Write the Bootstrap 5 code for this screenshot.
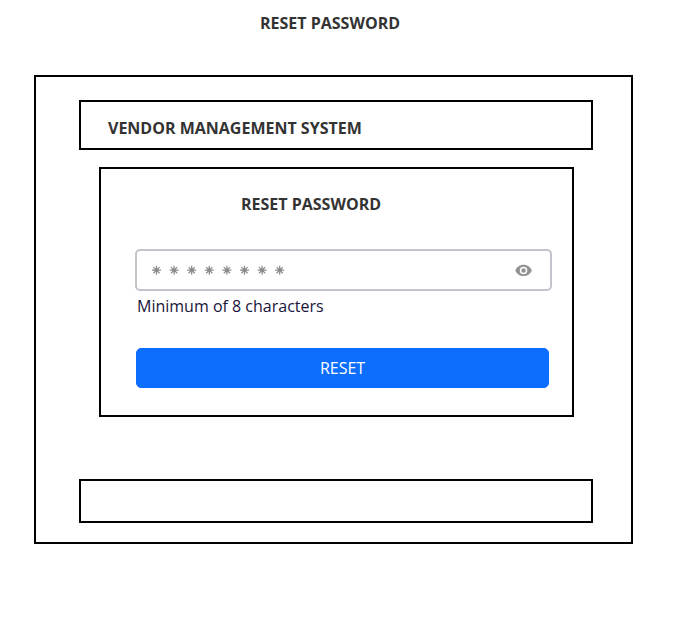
<!DOCTYPE html>
<html lang="en">
<head>
<meta charset="utf-8">
<meta name="viewport" content="width=device-width, initial-scale=1">
<title>Reset password</title>
<link href="https://cdn.jsdelivr.net/npm/bootstrap@5.3.0/dist/css/bootstrap.min.css" rel="stylesheet">
<style>
body{font-family:"Open Sans",sans-serif;font-size:16px;line-height:22px;color:#333;background:#fff}
.page-title{width:140px;margin:12px 0 41px 260px;font-size:16px;line-height:22px}
.line-box{border:2px solid #000}
.frame{width:599px;height:469px;margin-left:34px;padding:23px 38px 0 43px}
.brand-bar{height:50px;padding:5px 27px 0;margin-bottom:17px}
.brand-bar h2,.reset-panel h2{font-size:16px;line-height:22px}
.reset-panel{width:475px;height:250px;margin-left:20px;padding:24px 20px 0 35px}
.reset-panel h2{margin-bottom:34px;padding-left:105px}
.pass-field{height:42px;width:417px;margin-left:-1px;border:2px solid #c4c2ca;border-radius:5px;padding:0 17px 0 15px}
.hint{color:#19153a;padding-left:1px;margin:4px 0 31px}
.reset-btn{width:413px;height:40px;border-radius:5px;padding:0;--bs-btn-bg:#0d6efd}
.foot-bar{height:44px;margin-top:62px}
</style>
</head>
<body>
<h1 class="page-title fw-bold text-nowrap">RESET PASSWORD</h1>
<main class="frame line-box">
  <header class="brand-bar line-box d-flex align-items-center"><h2 class="fw-bold m-0">VENDOR MANAGEMENT SYSTEM</h2></header>
  <section class="reset-panel line-box">
    <h2 class="fw-bold mt-0">RESET PASSWORD</h2>
    <div class="pass-field d-flex align-items-center justify-content-between">
      <svg width="134" height="10" viewBox="0 0 134 10" stroke="#8c8c8c" stroke-width="1.25" fill="#8c8c8c"><defs><g id="star"><path d="M4.5 .7v9M0 5.200h9M1.400 2.100l6.200 6.200M7.600 2.100L1.400 8.300"/><circle cx="4.500" cy="5.200" r="2" stroke="none"/></g></defs><use href="#star"/><use href="#star" x="17.6"/><use href="#star" x="35.2"/><use href="#star" x="52.8"/><use href="#star" x="70.4"/><use href="#star" x="88"/><use href="#star" x="105.6"/><use href="#star" x="123.2"/></svg>
      <svg width="18" height="18" viewBox="0.600 -0.600 24 24" fill="#929292"><path d="M12 4.500C7 4.500 2.730 7.610 1 12c1.730 4.390 6 7.500 11 7.500s9.270-3.110 11-7.500c-1.730-4.390-6-7.500-11-7.500zM12 17a5 5 0 110-10 5 5 0 010 10zm0-8a3 3 0 100 6 3 3 0 000-6z"/></svg>
    </div>
    <p class="hint">Minimum of 8 characters</p>
    <button class="reset-btn btn btn-primary" type="button">RESET</button>
  </section>
  <footer class="foot-bar line-box"></footer>
</main>
<script src="https://cdn.jsdelivr.net/npm/bootstrap@5.3.0/dist/js/bootstrap.bundle.min.js"></script>
</body>
</html>
